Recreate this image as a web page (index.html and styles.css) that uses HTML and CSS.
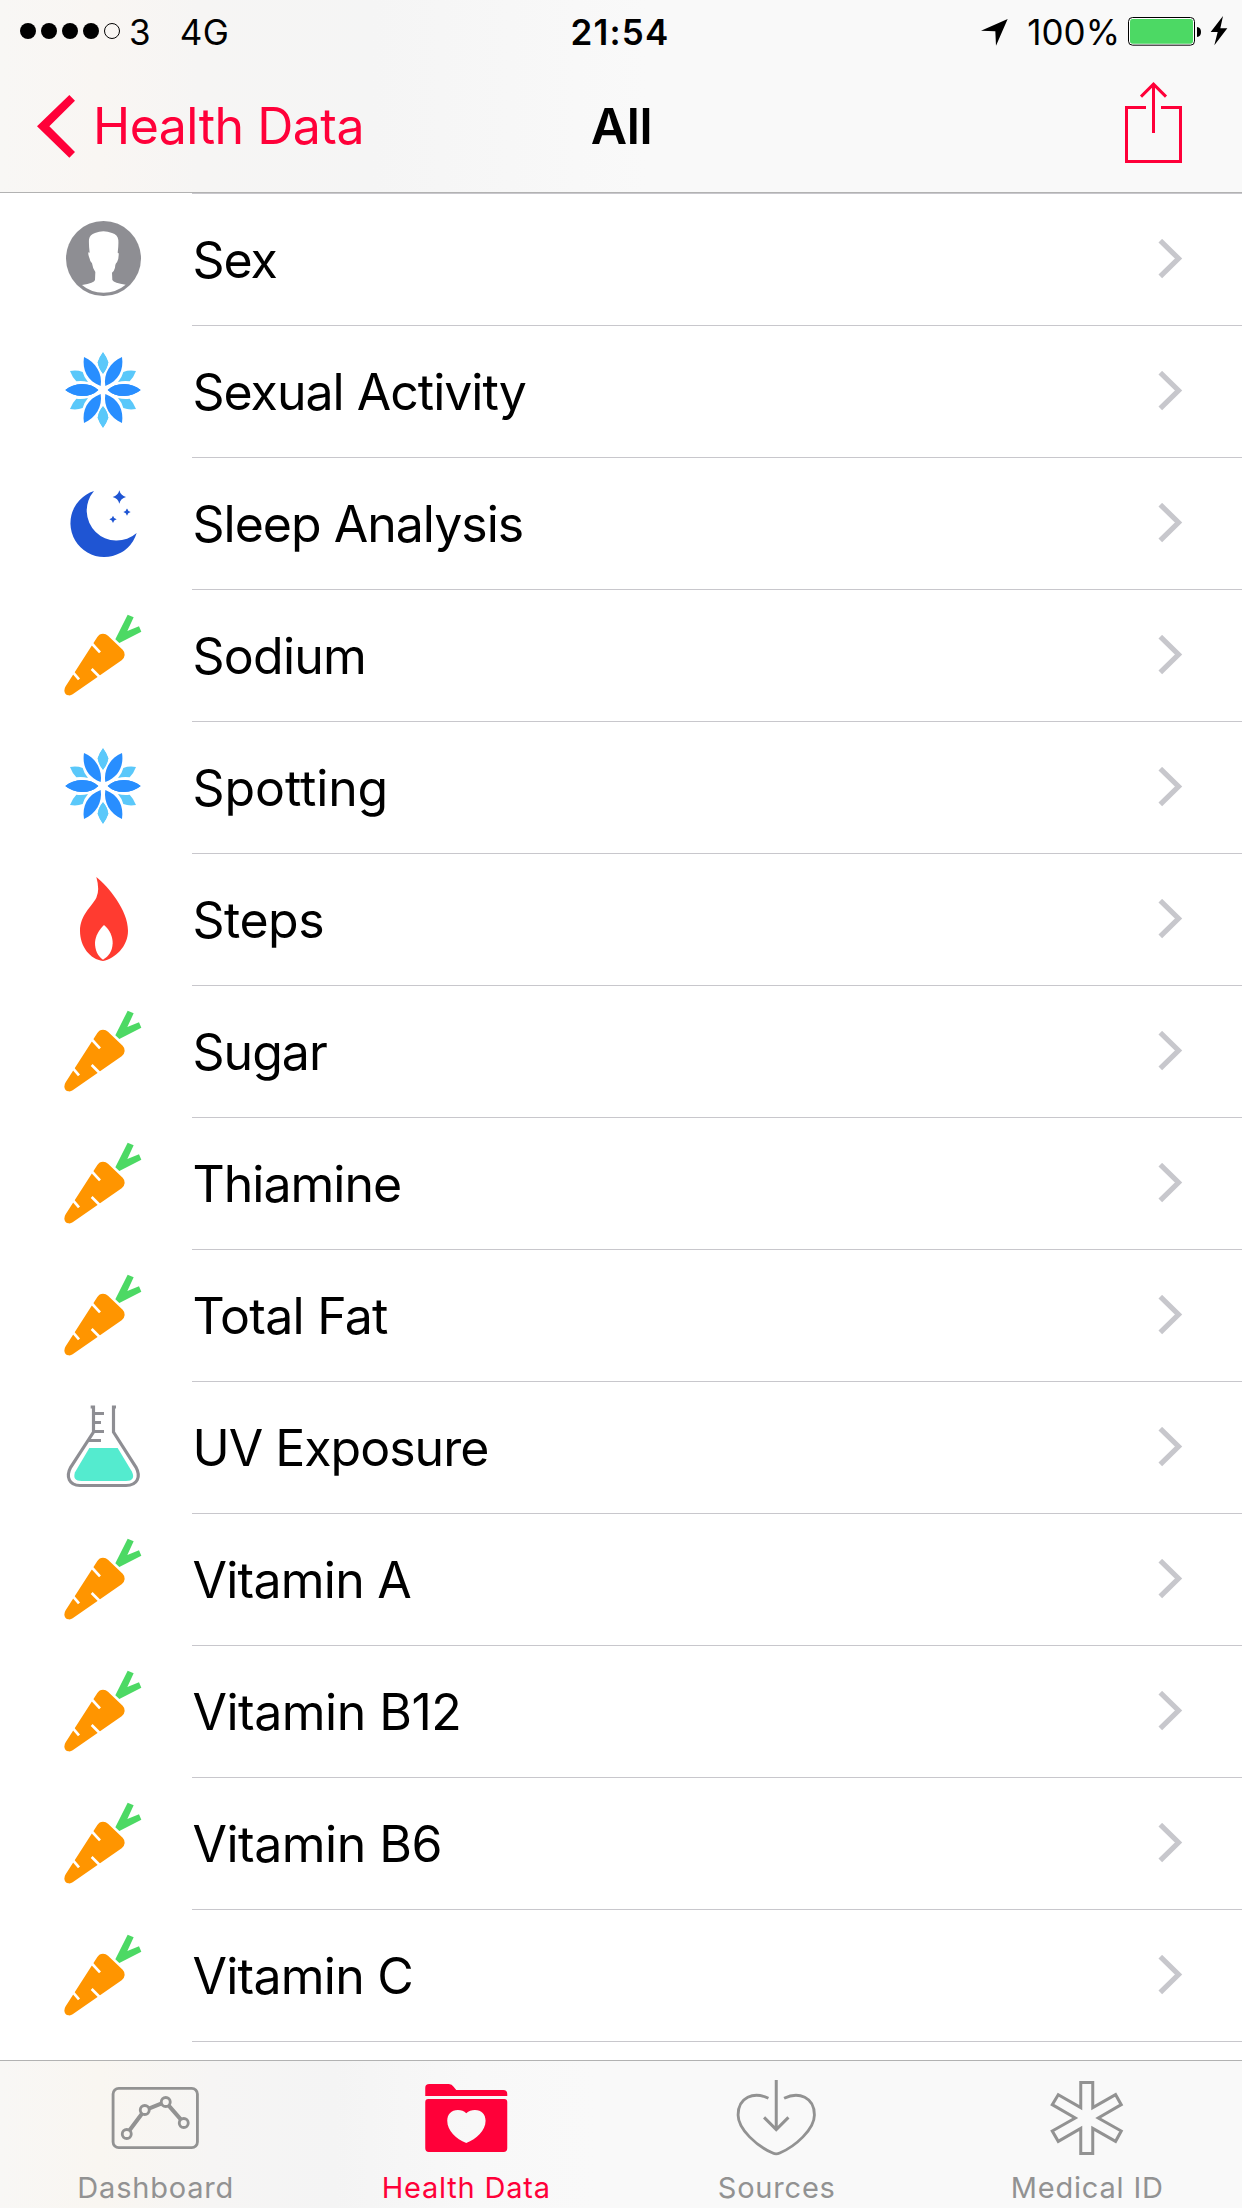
FILE: index.html
```html
<!DOCTYPE html>
<html lang="en">
<head>
<meta charset="utf-8">
<title>Health Data</title>
<link rel="stylesheet" href="styles.css">
</head>
<body>
<svg class="sprite" aria-hidden="true">
  <symbol id="chevron" viewBox="0 0 26 40"><path d="M2.300 1.700 20.500 19.500 2.300 37.300" fill="none" stroke="#c7c7cc" stroke-width="5.200"/></symbol>
  <symbol id="person" viewBox="54 42 270 270">
    <circle cx="190.500" cy="175.500" r="112.500" fill="#8e8e93"/>
    <path fill="#fff" d="M126 255Q163 249 165 240L166 216Q158 205 156 190Q150 185 149 176Q144 165 145 157L149 158Q146 135 147 118Q150 103 165 99Q190 88 216 99Q233 104 235 120Q236 135 233 158L236 160Q237 175 231 187Q226 190 225 203Q223 212 216 218L217 240Q222 249 257 254Q228 278 191 278Q152 278 126 255Z"/>
  </symbol>
  <symbol id="flower" viewBox="54 438 270 270">
    <g id="flower-half">
      <g id="flower-quarter">
        <path fill="#288eff" d="M203 570Q221 552 252 552Q282 553 302 570Q282 587 252 588Q221 588 203 570ZM196 558C190 522 210 486 246 471C252 510 236 543 196 558Z"/>
        <path fill="#5ac8fa" d="M189 457Q199 470 205 487Q202 506 189 521Q176 506 173 487Q179 470 189 457ZM288 513Q267 509 250 516Q246 532 234 546Q252 541 269 544Q281 532 288 513Z"/>
      </g>
      <use href="#flower-quarter" transform="matrix(-1 0 0 1 378 0)"/>
    </g>
    <use href="#flower-half" transform="matrix(1 0 0 -1 0 1140)"/>
  </symbol>
  <symbol id="moon" viewBox="54 54 270 270">
    <path fill="#1f55d3" d="M162 93A101.500 101.500 0 1 0 290 219A90 90 0 0 1 162 93ZM238 91Q242 107 258 111Q242 115 238 131Q234 115 218 111Q234 107 238 91ZM261 145Q263 154 272 156Q263 158 261 167Q259 158 250 156Q259 154 261 145ZM219 167Q221 176 230 178Q221 180 219 189Q217 180 208 178Q217 176 219 167Z"/>
  </symbol>
  <symbol id="carrot" viewBox="54 450 270 270">
    <path fill="#ff9500" d="M172 531Q178 521 189 521Q198 521 204 527L248 569Q255 576 254 585Q253 595 245 601L98 703Q92 707 86 706Q74 704 73 692Q73 685 77 679Z"/>
    <path fill="none" stroke="#fff" stroke-width="8" d="M154 549 180 577M155 627 182 654M99 637 117 658"/>
    <path fill="#4cd964" d="M263 464 281 472 262 513 297 499 304 515 238 549 226 538Z"/>
  </symbol>
  <symbol id="flame" viewBox="54 42 270 270">
    <path fill="#ff3b30" d="M169 51C205 80 264 150 264 212C264 260 225 295 189 303C150 297 120 260 120 212C120 165 155 140 169 113Q180 90 169 51Z"/>
    <path fill="#fff" d="M192 195C210 210 218 230 218 250C217 275 205 290 189 299C173 288 165 270 165 248C166 228 178 208 192 195Z"/>
  </symbol>
  <symbol id="flask" viewBox="54 66 270 270">
    <path fill="#54ebcf" d="M148 204H233L276 275Q288 302 258 303H125Q96 303 105 277Z"/>
    <path fill="none" stroke="#8e8e93" stroke-width="9.500" d="M152 81H160.500V156L92 262C77 290 87 316.500 120 316.500H258C293 316.500 303 290 288 262L220.500 156V81H228M160 100.500H192M160 127.500H183M160 154.500H192M146 181.500H183"/>
  </symbol>
</svg>

<header class="header">
  <div class="status">
    <div class="status-left">
      <svg class="signal" viewBox="0 0 100 16"><circle cx="8" cy="8" r="8"/><circle cx="29" cy="8" r="8"/><circle cx="50" cy="8" r="8"/><circle cx="71" cy="8" r="8"/><circle cx="92" cy="8" r="7.500" fill="none" stroke="#000"/></svg>
      <span class="carrier">3</span>
      <span class="network">4G</span>
    </div>
    <span class="time">21:54</span>
    <div class="status-right">
      <svg class="location" viewBox="64 54 81 81"><path d="M144 54 109 134 107 91 64 89Z"/></svg>
      <span class="percent">100%</span>
      <svg class="power" viewBox="504 45 300 90">
        <rect x="505.500" y="49.500" width="198" height="83" rx="12" fill="#fff" stroke="#000" stroke-width="3"/>
        <rect x="510" y="54" width="189" height="74" rx="8" fill="#4cd964"/>
        <path d="M711 78Q723 80 723 93Q723 106 711 108Z"/>
        <path d="M789 45 752 93H773L763 133 802 82H781Z"/>
      </svg>
    </div>
  </div>
  <nav class="nav">
    <a class="back"><svg class="back-icon" viewBox="111 285 117 189"><path fill="#ff0039" d="M208 285 225 302 148 379 225 456 208 473 111 379Z"/></svg><span class="back-label">Health Data</span></a>
    <h1 class="title">All</h1>
    <svg class="share" viewBox="495 246 171 243"><path fill="none" stroke="#ff0039" stroke-width="9" d="M558 322.500H499.500V484.500H661.500V322.500H603M580.500 399V252M543 290 580.500 252.500 618 290"/></svg>
  </nav>
</header>

<main class="list">
  <div class="row"><svg class="icon"><use href="#person"/></svg><span class="label tight">Sex</span><svg class="chevron"><use href="#chevron"/></svg></div>
  <div class="row"><svg class="icon"><use href="#flower"/></svg><span class="label tight">Sexual Activity</span><svg class="chevron"><use href="#chevron"/></svg></div>
  <div class="row"><svg class="icon"><use href="#moon"/></svg><span class="label tight">Sleep Analysis</span><svg class="chevron"><use href="#chevron"/></svg></div>
  <div class="row"><svg class="icon"><use href="#carrot"/></svg><span class="label">Sodium</span><svg class="chevron"><use href="#chevron"/></svg></div>
  <div class="row"><svg class="icon"><use href="#flower"/></svg><span class="label loose">Spotting</span><svg class="chevron"><use href="#chevron"/></svg></div>
  <div class="row"><svg class="icon"><use href="#flame"/></svg><span class="label semi">Steps</span><svg class="chevron"><use href="#chevron"/></svg></div>
  <div class="row"><svg class="icon"><use href="#carrot"/></svg><span class="label tight">Sugar</span><svg class="chevron"><use href="#chevron"/></svg></div>
  <div class="row"><svg class="icon"><use href="#carrot"/></svg><span class="label tight">Thiamine</span><svg class="chevron"><use href="#chevron"/></svg></div>
  <div class="row"><svg class="icon"><use href="#carrot"/></svg><span class="label">Total Fat</span><svg class="chevron"><use href="#chevron"/></svg></div>
  <div class="row"><svg class="icon"><use href="#flask"/></svg><span class="label tight">UV Exposure</span><svg class="chevron"><use href="#chevron"/></svg></div>
  <div class="row"><svg class="icon"><use href="#carrot"/></svg><span class="label">Vitamin A</span><svg class="chevron"><use href="#chevron"/></svg></div>
  <div class="row"><svg class="icon"><use href="#carrot"/></svg><span class="label semi">Vitamin B12</span><svg class="chevron"><use href="#chevron"/></svg></div>
  <div class="row"><svg class="icon"><use href="#carrot"/></svg><span class="label semi">Vitamin B6</span><svg class="chevron"><use href="#chevron"/></svg></div>
  <div class="row"><svg class="icon"><use href="#carrot"/></svg><span class="label">Vitamin C</span><svg class="chevron"><use href="#chevron"/></svg></div>
</main>

<footer class="tabs">
  <a class="tab">
    <svg class="tab-icon" viewBox="120.750 48 270 240"><g fill="none" stroke="#929292" stroke-width="8.500"><rect x="130" y="85" width="253" height="178" rx="17"/><g stroke-width="8.500"><circle cx="171" cy="222" r="13.500"/><circle cx="225" cy="150" r="13.500"/><circle cx="288" cy="126" r="13.500"/><circle cx="342" cy="189" r="13.500"/></g><path stroke-width="12" d="M180 210 216 162M239 145 274 131M297 137 333 178"/></g></svg>
    <span class="tab-label">Dashboard</span>
  </a>
  <a class="tab active">
    <svg class="tab-icon" viewBox="1052.250 48 270 240"><path fill="#ff0039" fill-rule="evenodd" d="M1065 108V83Q1065 72 1077 72H1136Q1145 72 1150 80L1158 90H1299Q1311 90 1311 102V108ZM1074 117H1302Q1311 117 1311 126V265Q1311 276 1300 276H1076Q1065 276 1065 265V126Q1065 117 1074 117ZM1188 160Q1178 150 1163 150C1143 150 1131 163 1131 182C1131 212 1157 236 1188 249C1219 236 1246 212 1246 182C1246 163 1234 150 1214 150Q1199 150 1188 160Z"/></svg>
    <span class="tab-label">Health Data</span>
  </a>
  <a class="tab">
    <svg class="tab-icon" viewBox="93.750 48 270 240"><g fill="none" stroke="#929292" stroke-width="9"><path d="M229.500 60V209M193 172 229.500 209 266 172"/><path stroke-width="8.500" d="M206 115C162 93 115 112 115 165C115 208 172 259 219 279Q229 284 240 279C287 259 344 208 344 165C344 112 297 93 253 115"/></g></svg>
    <span class="tab-label">Sources</span>
  </a>
  <a class="tab">
    <svg class="tab-icon" viewBox="1025.250 48 270 240"><path fill="none" stroke="#929292" stroke-width="9" d="M1141.500 67.500H1177.500V143L1246 104 1263 134 1194 174 1263 213 1246 244 1177.500 205V280.500H1141.500V205L1074 244 1056 213 1125 174 1056 134 1074 104 1141.500 143Z"/></svg>
    <span class="tab-label">Medical ID</span>
  </a>
</footer>
</body>
</html>
```
FILE: styles.css
```css
* { box-sizing: border-box; }

body {
  margin: 0;
  width: 1242px;
  height: 2208px;
  display: flex;
  flex-direction: column;
  overflow: hidden;
  background: #fff;
  color: #000;
  font-family: Inter, "Liberation Sans", sans-serif;
}

.sprite { display: none; }
svg { display: block; flex: none; }

/* Header */
.header {
  height: 193px;
  flex: none;
  border-bottom: 1px solid #b2b2b2;
  background: linear-gradient(90deg, #f8f7f5 0, #f9f6f3 8%, #f6f5f4 16%, #f5f5f5 30%, #f9f9f9 52%);
}

.status {
  height: 60px;
  display: grid;
  grid-template-columns: 1fr auto 1fr;
  align-items: center;
  padding: 0 14px 0 20px;
  font-size: 35px;
}

.status span { padding-top: 2px; line-height: 60px; }
.status-left { display: flex; align-items: center; }
.signal { width: 100px; height: 16px; }
.carrier { margin-left: 9px; }
.network { margin-left: 29px; letter-spacing: 0.5px; }
.time { margin: 0 4px 0 -4px; font-weight: 600; letter-spacing: 1.2px; }
.status-right { display: flex; align-items: center; justify-content: flex-end; }
.location { width: 27px; height: 27px; margin: 2px 19px 0 0; }
.percent { margin-right: 8px; }
.power { width: 100px; height: 30px; }

.nav {
  height: 132px;
  display: grid;
  grid-template-columns: 1fr auto 1fr;
  align-items: center;
  padding: 0 60px 0 37px;
  font-size: 50px;
}

.back { display: flex; align-items: center; color: #ff0039; }
.back-icon { width: 39px; height: 63px; }
.back-label { margin-left: 17px; letter-spacing: -0.5px; }
.title { margin: 0 -24px 0 0; font-size: 50px; font-weight: 600; letter-spacing: -0.3px; }
.share { width: 57px; height: 81px; justify-self: end; margin-bottom: 7px; }

/* Records */
.list {
  flex: 1;
  min-height: 0;
  overflow: hidden;
  padding-top: 1px;
  background: linear-gradient(90deg, transparent 192px, #c8c7cc 192px) top / 100% 1px no-repeat;
}

.row {
  height: 132px;
  display: flex;
  align-items: center;
  padding: 0 58px;
  background: linear-gradient(90deg, transparent 192px, #c8c7cc 192px) bottom / 100% 1px no-repeat;
}

.icon { width: 90px; height: 90px; margin-bottom: 2px; }
.label { flex: 1; margin-left: 44.5px; font-size: 50px; line-height: 60px; letter-spacing: -0.75px; }
.label.tight { letter-spacing: -1px; }
.label.semi { letter-spacing: -0.5px; }
.label.loose { letter-spacing: -0.1px; }
.chevron { width: 26px; height: 40px; margin-bottom: 2px; }

/* Tab bar */
.tabs {
  height: 148px;
  flex: none;
  display: grid;
  grid-template-columns: repeat(4, 1fr);
  border-top: 1px solid #b2b2b2;
  background: linear-gradient(90deg, #f8f7f5 0, #f9f6f1 8%, #f6f5f4 17%, #f4f4f4 27%, #f8f8f8 38%, #f9f9f9 48%);
}

.tab { display: flex; flex-direction: column; align-items: center; padding-top: 15px; color: #929292; }
.tab.active { color: #ff0039; }
.tab-icon { width: 90px; height: 80px; }
.tab-label { margin-top: 15px; padding-left: 1px; font-size: 29px; line-height: 34px; letter-spacing: 0.8px; }
```
